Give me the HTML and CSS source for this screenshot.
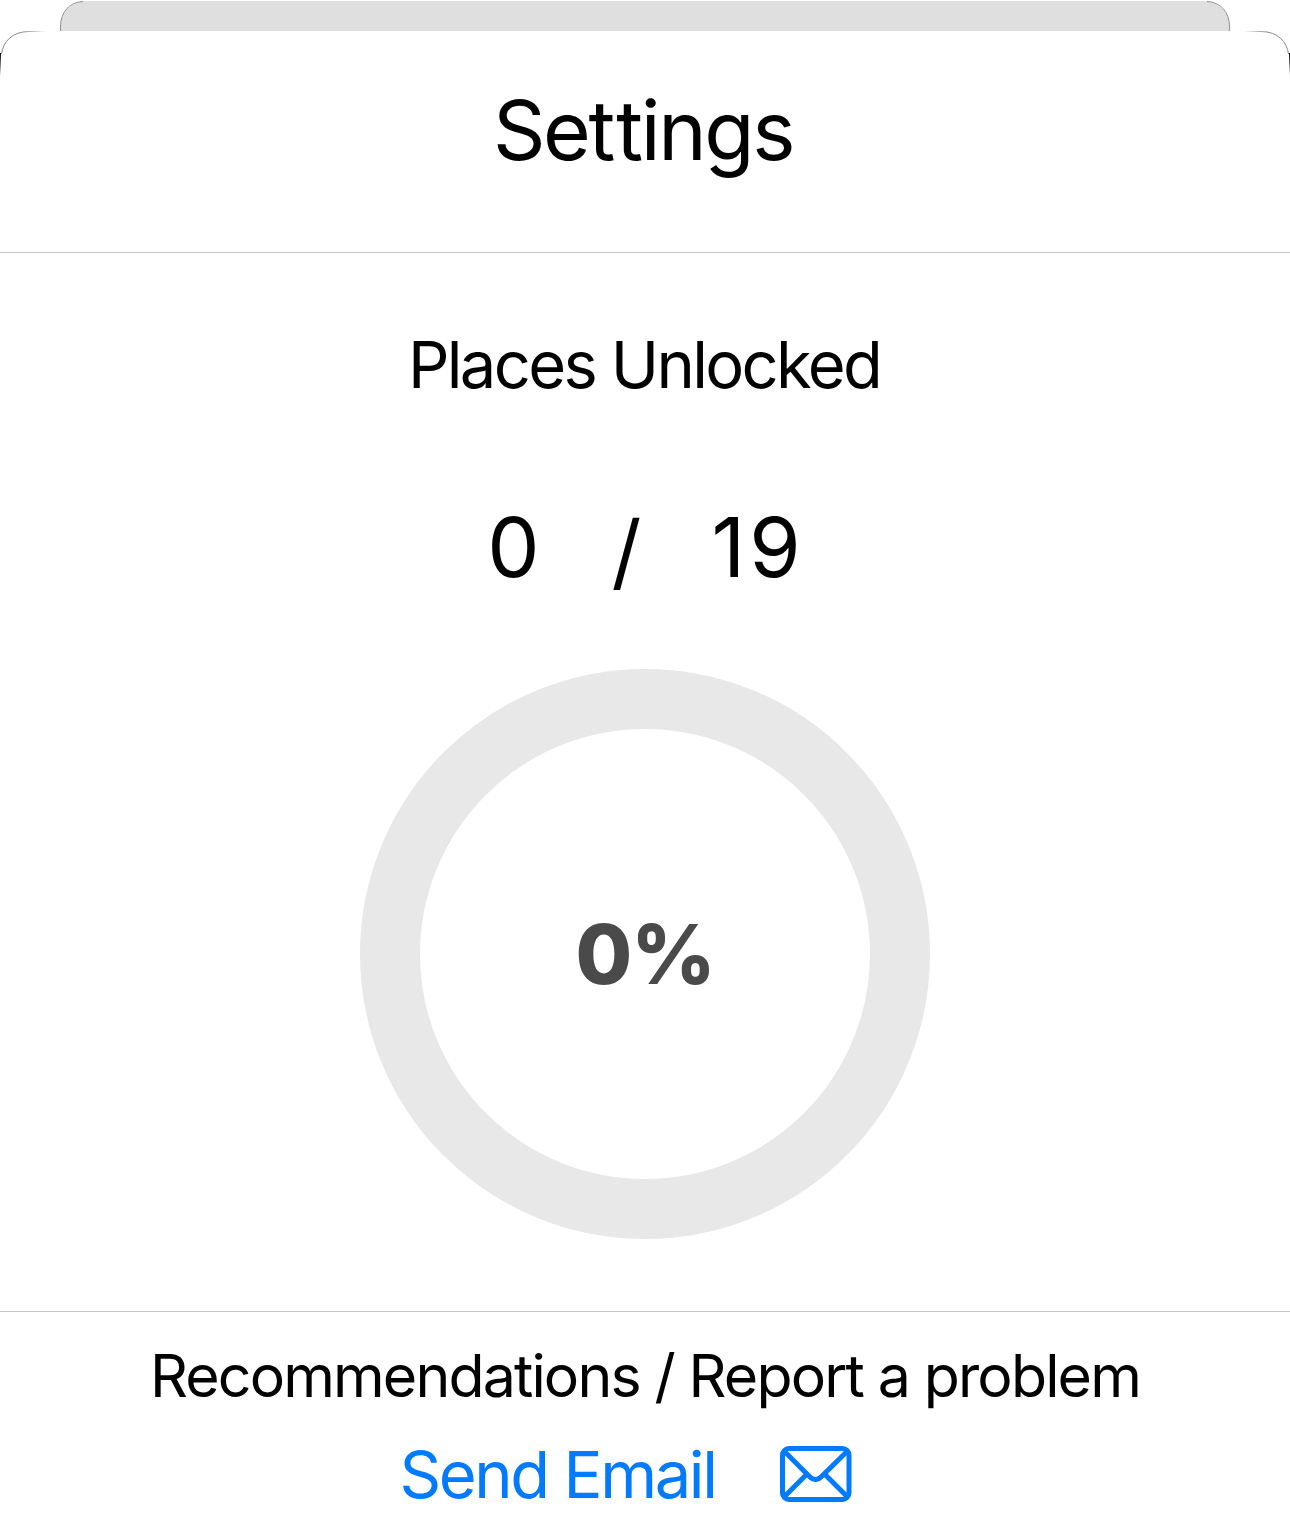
FILE: index.html
```
<!DOCTYPE html>
<html lang="en">
<head>
<meta charset="utf-8">
<title>Settings</title>
<link rel="stylesheet" href="styles.css">
</head>
<body>
<svg class="corner" viewBox="0 0 90 90" fill="none">
  <defs>
    <linearGradient id="edge" x1="0" y1="53" x2="0" y2="76" gradientUnits="userSpaceOnUse"><stop stop-color="#000"/><stop offset="1" stop-color="#000" stop-opacity="0"/></linearGradient>
    <linearGradient id="arc" x1="22" y1="0" x2="46" y2="0" gradientUnits="userSpaceOnUse"><stop stop-color="#888"/><stop offset="1" stop-color="#888" stop-opacity="0"/></linearGradient>
  </defs>
  <path d="M1.500 54C3 42 12 31.500 29 31.500L46 31.400" stroke="url(#arc)"/>
  <path d="M60.500 31V26C60.500 13 69 2 83 1.500" stroke="#888" stroke-width=".9"/>
  <path d="M0 53H1V76H0Z" fill="url(#edge)"/>
</svg>
<svg class="corner corner-right" viewBox="0 0 90 90" fill="none">
  <path d="M1.500 54C3 42 12 31.500 29 31.500L46 31.400" stroke="url(#arc)"/>
  <path d="M60.500 31V26C60.500 13 69 2 83 1.500" stroke="#888" stroke-width=".9"/>
  <path d="M0 53H1V76H0Z" fill="url(#edge)"/>
</svg>
<div class="backdrop"></div>
<main class="sheet">
  <header class="header"><h1 class="title">Se<span class="wide">t</span>tings</h1></header>
  <section class="progress">
    <h2 class="subtitle">Places Unlocked</h2>
    <div class="count"><span>0</span><span class="slash">/</span><span class="total">19</span></div>
    <div class="ring"><span class="percent">0%</span></div>
  </section>
  <footer class="footer">
    <p class="report">Recommendations / Report a problem</p>
    <a class="email"><span class="email-label">Send Email</span>
      <svg class="envelope" viewBox="0 0 72 56" fill="none" stroke="currentColor" stroke-width="5" stroke-linejoin="round">
        <rect x="2.500" y="2.500" width="66.500" height="51" rx="6.500"/>
        <path d="M4 5 29.500 30.500Q35.500 36.500 41.500 30.500L67.500 5M4 51 26.500 28.500M67.500 51 45 28.500"/>
      </svg>
    </a>
  </footer>
</main>
</body>
</html>
```
FILE: styles.css
```
* { box-sizing: border-box; }
body { position: relative; margin: 0; width: 1290px; height: 1521px; overflow: hidden; background: #fff; color: #000; font-family: Inter, "Liberation Sans", sans-serif; }
h1, h2, p { margin: 0; font-weight: 420; white-space: nowrap; }
.corner { position: absolute; z-index: 1; top: 0; left: 0; width: 90px; height: 90px; }
.corner-right { left: auto; right: 0; transform: scaleX(-1); }
.backdrop { height: 30px; margin: 1px 60px 0; background: #dfdfdf; border-radius: 26px 26px 0 0; }
.sheet { height: 1490px; background: #fff; border-radius: 30px 30px 0 0; }
.header { height: 222px; border-bottom: 1px solid #c6c6c8; display: flex; justify-content: center; padding-top: 50px; }
.title { margin-right: 4px; font-size: 82px; line-height: 100px; letter-spacing: -2.4px; font-variant-ligatures: none; }
.wide { letter-spacing: 1px; }
.progress { height: 1059px; border-bottom: 1px solid #c6c6c8; display: flex; flex-direction: column; align-items: center; padding-top: 72px; }
.subtitle { margin-right: 2px; font-size: 65px; line-height: 80px; letter-spacing: -2.65px; }
.count { display: flex; gap: 72px; margin-top: 92px; font-size: 83px; line-height: 100px; }
.slash { padding-top: 4px; height: 100px; }
.total { letter-spacing: 4px; margin: 0 -2px 0 -2px; }
.ring { width: 570px; height: 570px; margin-top: 72px; border: 60px solid #e8e8e8; border-radius: 50%; display: flex; align-items: center; justify-content: center; }
.percent { padding-top: 2px; font-size: 82px; line-height: 100px; font-weight: 800; letter-spacing: -1px; color: #4a4a4a; }
.footer { display: flex; flex-direction: column; align-items: center; padding-top: 24px; }
.report { font-size: 59px; line-height: 80px; letter-spacing: -1.85px; }
.email { display: flex; align-items: center; gap: 64px; margin-top: 19px; margin-right: 39px; color: #007aff; }
.email-label { font-size: 65px; line-height: 80px; letter-spacing: -2.4px; white-space: nowrap; }
.envelope { width: 72px; height: 56px; margin-bottom: 2px; }
```
